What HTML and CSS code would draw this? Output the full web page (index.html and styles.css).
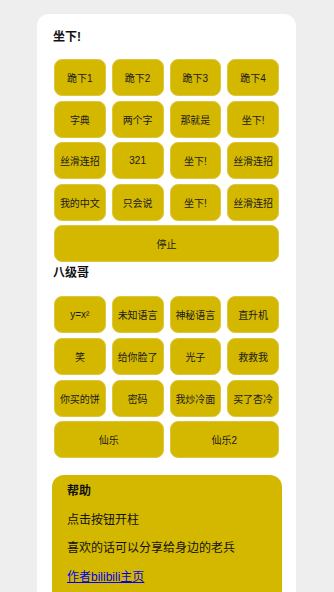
FILE: index.html
```html
<!DOCTYPE html>
<html lang="zh-CN">
<head>
    <meta charset="UTF-8">
    <meta name="viewport" content="width=device-width, initial-scale=1.0">
    <title>坐下!</title>
    <link rel="stylesheet" href="styles.css">
</head>
<body>
    <div class="card">
        <!-- 第一组 -->
        <h3 class="group-title">坐下!</h3>
        <div class="btn-grid">
            <button class="btn">跪下1</button>
            <button class="btn">跪下2</button>
            <button class="btn">跪下3</button>
            <button class="btn">跪下4</button>
            <button class="btn">字典</button>
            <button class="btn">两个字</button>
            <button class="btn">那就是</button>
            <button class="btn">坐下!</button>
            <button class="btn">丝滑连招</button>
            <button class="btn">321</button>
            <button class="btn">坐下!</button>
            <button class="btn">丝滑连招</button>
            <button class="btn">我的中文</button>
            <button class="btn">只会说</button>
            <button class="btn">坐下!</button>
            <button class="btn">丝滑连招</button>
            <button class="btn wide">停止</button>
        </div>

        <!-- 第二组 -->
        <h3 class="group-title second">八级哥</h3>
        <div class="btn-grid">
            <button class="btn">y=x²</button>
            <button class="btn">未知语言</button>
            <button class="btn">神秘语言</button>
            <button class="btn">直升机</button>
            <button class="btn">笑</button>
            <button class="btn">给你脸了</button>
            <button class="btn">光子</button>
            <button class="btn">救救我</button>
            <button class="btn">你买的饼</button>
            <button class="btn">密码</button>
            <button class="btn">我炒冷面</button>
            <button class="btn">买了杏冷</button>
            <button class="btn half">仙乐</button>
            <button class="btn half">仙乐2</button>
        </div>

        <!-- 帮助 -->
        <div class="help">
            <h4>帮助</h4>
            <p>点击按钮开柱</p>
            <p>喜欢的话可以分享给身边的老兵</p>
            <p><a href="#">作者bilibili主页</a></p>
        </div>
    </div>
</body>
</html>
```

FILE: styles.css
```css
* {
    box-sizing: border-box;
}

body {
    margin: 0;
    padding: 14px 38px 0 37px;
    background-color: #eeeeee;
    font-family: "Liberation Sans", "Noto Sans CJK SC", sans-serif;
    color: #111;
    height: 592px;
    overflow: hidden;
}

.card {
    background: #fff;
    border-radius: 12px;
    padding: 15px 17px 40px 17px;
    min-height: 600px;
}

.group-title {
    margin: 0 0 13px -1px;
    font-size: 12px;
    font-weight: bold;
    line-height: 17px;
}

.group-title.second {
    margin-top: 3px;
    margin-bottom: 14px;
}

.btn-grid {
    display: grid;
    grid-template-columns: repeat(4, 1fr);
    column-gap: 6px;
    row-gap: 4.6px;
}

.btn {
    height: 37px;
    padding: 0;
    background-color: #d4b800;
    border: 1px solid #dcc640;
    border-radius: 8px;
    font-family: "Liberation Sans", "Noto Sans CJK SC", sans-serif;
    font-size: 10px;
    color: #1a1a1a;
    cursor: pointer;
}

.btn.wide {
    grid-column: span 4;
}

.btn.half {
    grid-column: span 2;
}

.help {
    margin: 17px -3px 0 -2px;
    background-color: #d4b800;
    border-radius: 12px;
    padding: 8px 15px 20px 15px;
    font-size: 12px;
}

.help h4 {
    margin: 0;
    font-size: 12px;
    font-weight: bold;
    line-height: 17px;
}

.help p {
    margin: 11.5px 0 0 0;
    line-height: 17px;
}

.help a {
    color: #0000ee;
}
```
